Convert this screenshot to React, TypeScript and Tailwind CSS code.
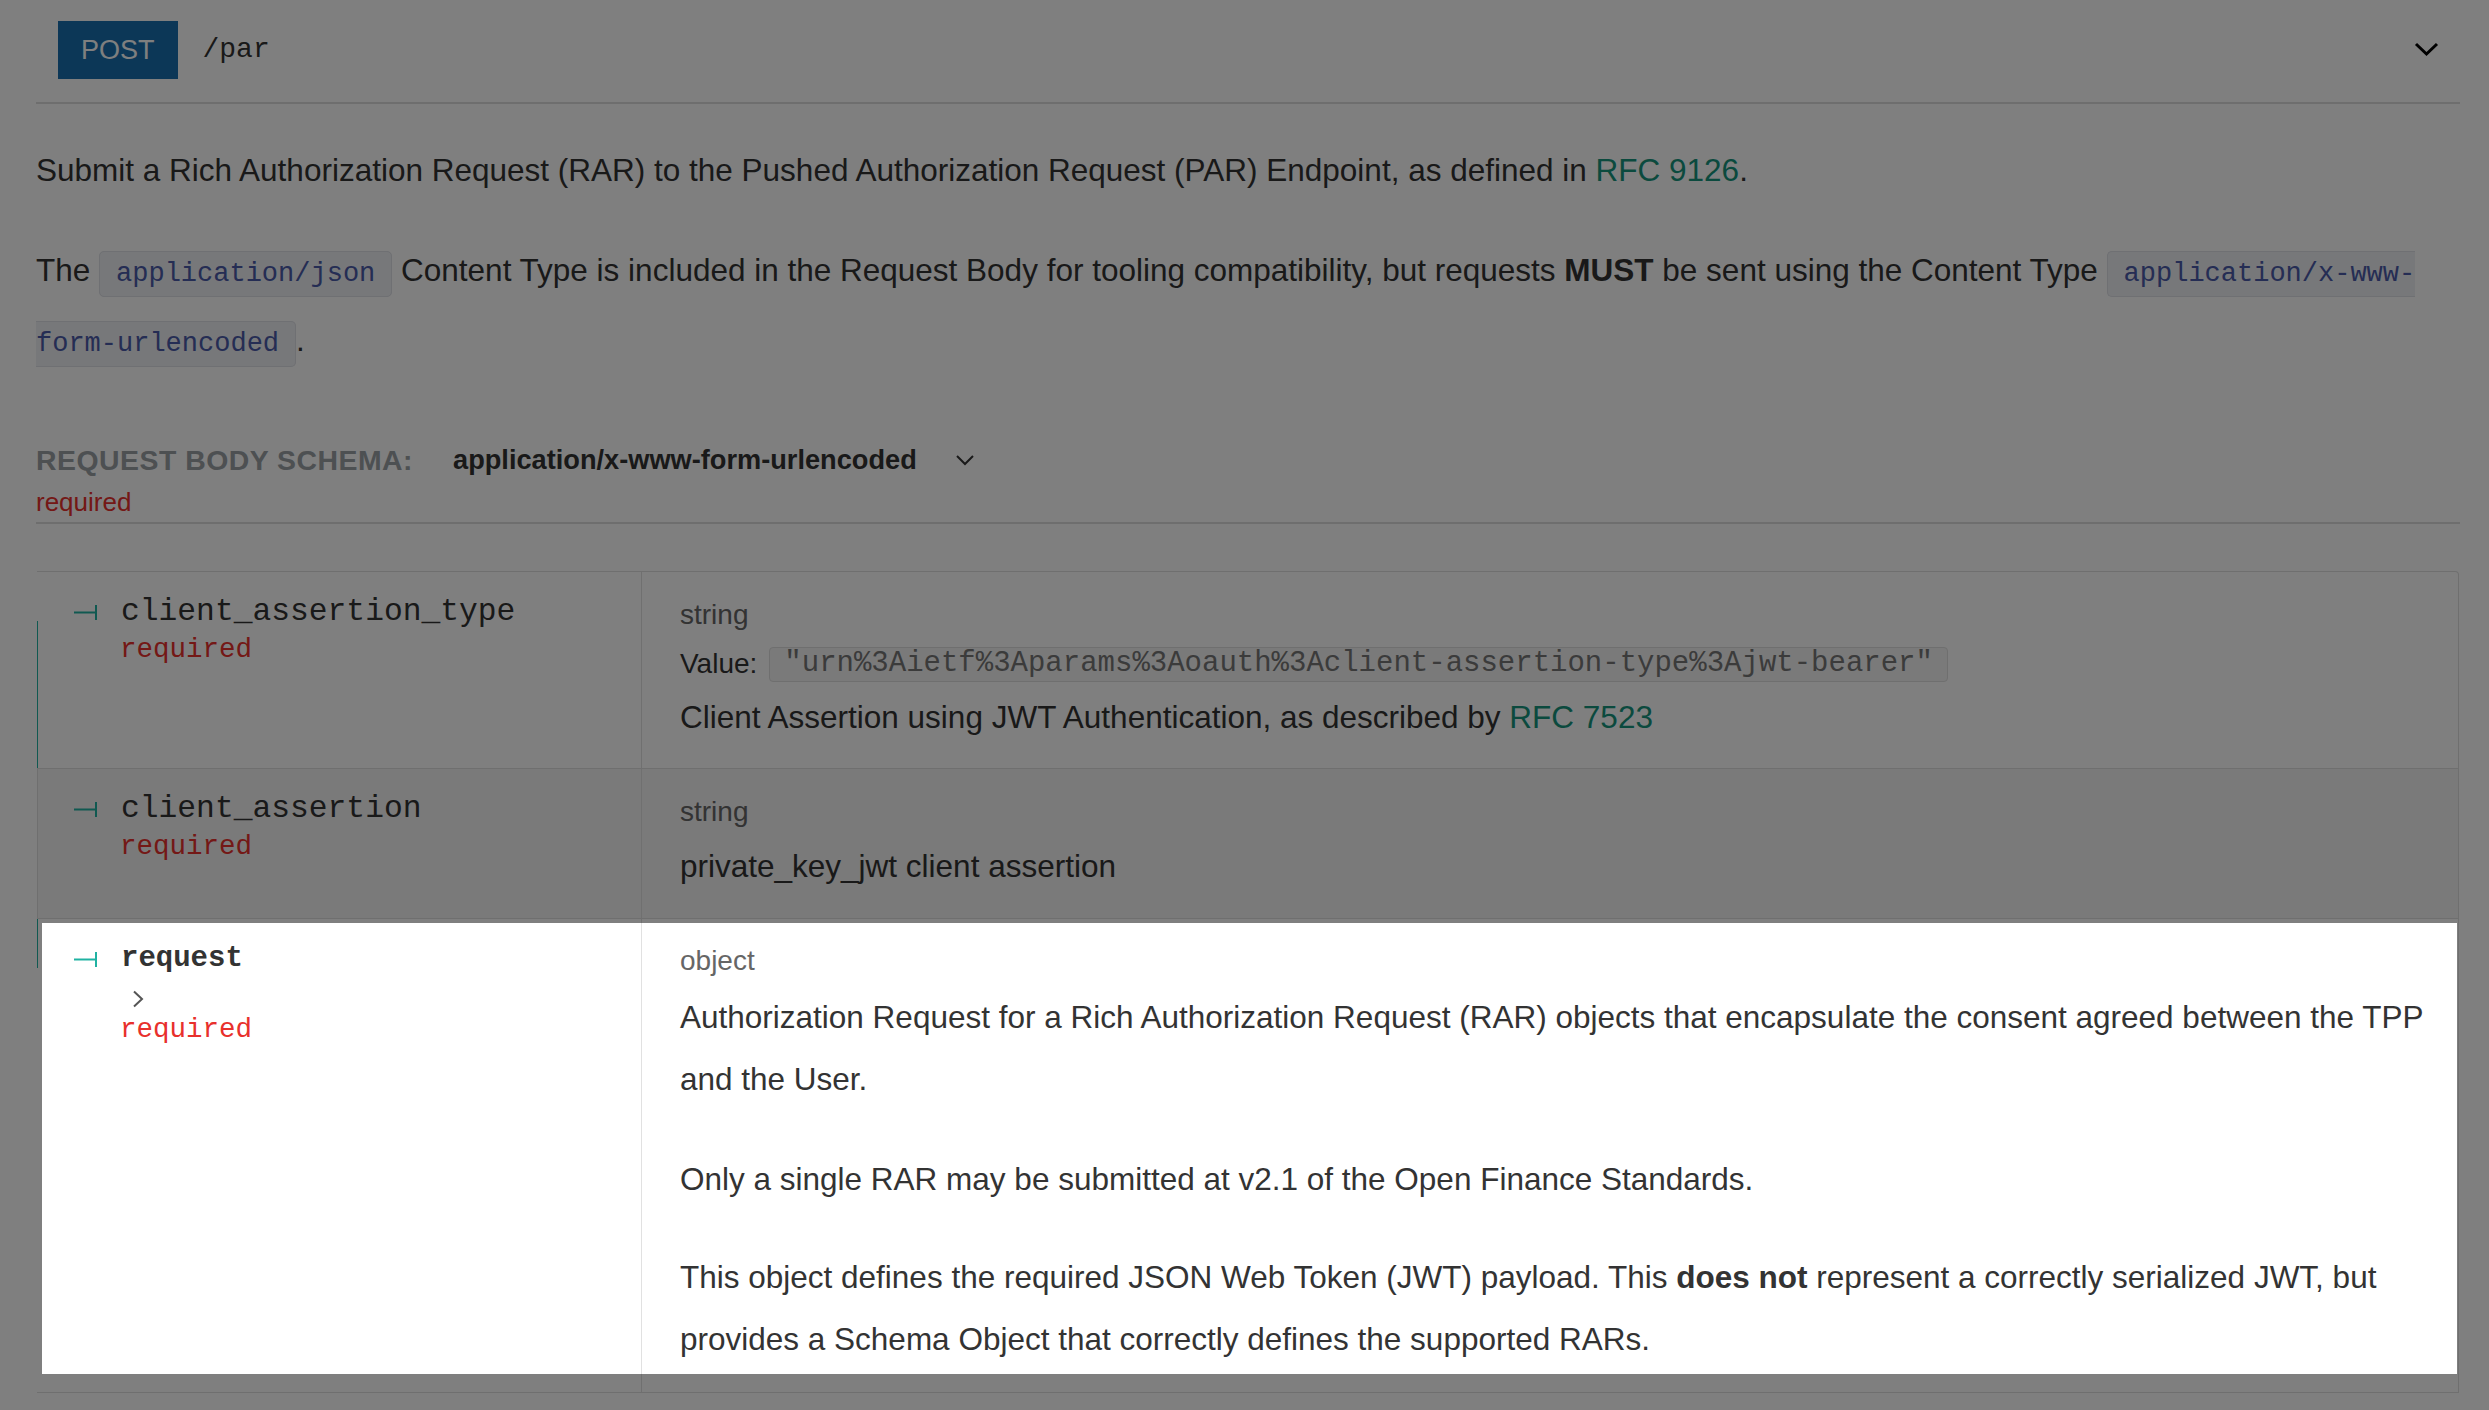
const sans = "font-['Liberation_Sans',Arial,sans-serif]";
const mono = "font-['Liberation_Mono','Courier_New',monospace]";

function Marker() {
  return (
    <svg width="24" height="15" viewBox="0 0 24 15" className="shrink-0">
      <path d="M0 7.5 H22" stroke="#20b2a2" strokeWidth="2" />
      <path d="M22 0 V15" stroke="#20b2a2" strokeWidth="2" />
    </svg>
  );
}

function TreeLine({ kind }: { kind: 'first' | 'middle' | 'last' }) {
  if (kind === 'middle') return <div className="w-px self-stretch bg-[#dedede]" />;
  return (
    <div className="w-px self-stretch flex flex-col">
      <div className={`h-[49px] ${kind === 'last' ? 'bg-[#20b2a2]' : ''}`} />
      <div className={`flex-1 ${kind === 'first' ? 'bg-[#20b2a2]' : ''}`} />
    </div>
  );
}

export default function App() {
  return (
    <div className={`min-h-screen bg-white text-[#333] pl-[36px] pr-[29px] ${sans}`}>
      {/* Operation header */}
      <div className="flex items-start h-[104px] border-b-2 border-[#dcdcdc] pl-[22px] pr-[21px] pt-[21px]">
        <div className="h-[58px] px-[23px] flex items-center bg-[#186faf] text-white text-[27px]">POST</div>
        <div className={`h-[58px] flex items-center ml-[25px] text-[28px] text-[#333] ${mono}`}>/par</div>
        <svg width="25" height="15" viewBox="0 0 25 15" className="ml-auto mt-[21px]">
          <polyline points="2,2 12.5,12 23,2" fill="none" stroke="#000" strokeWidth="3" />
        </svg>
      </div>

      {/* Description */}
      <p className="mt-[35px] text-[31.5px] leading-[62px]">
        Submit a Rich Authorization Request (RAR) to the Pushed Authorization Request (PAR) Endpoint, as defined in{' '}
        <span className="text-[#16947c]">RFC 9126</span>.
      </p>
      <p className="mt-[36px] text-[31.5px] leading-[66px]">
        The{' '}
        <code className={`px-[16px] py-[7px] rounded-[5px] border border-[#dee0e6] bg-[#eef0f4] text-[27px] text-[#4a5aa8] ${mono}`}>
          application/json
        </code>{' '}
        Content Type is included in the Request Body for tooling compatibility, but requests <b>MUST</b> be sent using the Content Type{' '}
        <code className={`px-[16px] py-[7px] rounded-[5px] border border-[#dee0e6] bg-[#eef0f4] text-[27px] text-[#4a5aa8] ${mono}`}>
          application/x-www-
          <br />
          form-urlencoded
        </code>
        .
      </p>

      {/* Request body schema */}
      <div className="mt-[65px] flex items-center h-[36px]">
        <span className="text-[28.4px] font-bold tracking-[0.5px] text-[#9aa0a5] uppercase">Request Body schema:</span>
        <span className="ml-[40px] text-[27.2px] font-bold text-[#333]">application/x-www-form-urlencoded</span>
        <svg width="20" height="12" viewBox="0 0 20 12" className="ml-[38px]">
          <polyline points="2,2 10,10 18,2" fill="none" stroke="#333" strokeWidth="2" />
        </svg>
      </div>
      <div className="text-[26px] leading-[32px] text-[#e8302c] mt-[8px]">required</div>
      <div className="mt-[4px] border-b-2 border-[#dcdcdc]" />

      {/* Properties table */}
      <div className="mt-[47px] mx-px border-t border-r border-b border-[#dedede] rounded-tr-[4px]">
        {/* row 1 */}
        <div className="flex border-b border-[#dedede]">
          <div className="w-[604px] flex shrink-0">
            <TreeLine kind="first" />
            <div className="pl-[36px] pt-[21px]">
              <div className="flex items-center h-[38px]">
                <Marker />
                <span className={`ml-[23px] text-[31.3px] text-[#333] ${mono}`}>client_assertion_type</span>
              </div>
              <div className={`ml-[46px] h-[37px] leading-[37px] text-[27.5px] text-[#e8302c] ${mono}`}>required</div>
            </div>
          </div>
          <div className="flex-1 border-l border-[#e1e1e1] pl-[38px] pr-[10px] pt-[24px] pb-[28px]">
            <div className="h-[38px] leading-[38px] text-[28px] text-[#666]">string</div>
            <div className="mt-[7px] h-[46px] flex items-center text-[28px]">
              <span>Value:</span>
              <span className={`ml-[12px] px-[14px] h-[35px] flex items-center rounded-[4px] border border-[#dedede] bg-[#f4f4f4] text-[29px] text-[#777] ${mono}`}>
                "urn%3Aietf%3Aparams%3Aoauth%3Aclient-assertion-type%3Ajwt-bearer"
              </span>
            </div>
            <div className="mt-[7px] h-[46px] leading-[46px] text-[31.5px]">
              Client Assertion using JWT Authentication, as described by <span className="text-[#16947c]">RFC 7523</span>
            </div>
          </div>
        </div>

        {/* row 2 */}
        <div className="flex border-b border-[#dedede] bg-[#f4f4f4]">
          <div className="w-[604px] flex shrink-0">
            <TreeLine kind="middle" />
            <div className="pl-[36px] pt-[21px]">
              <div className="flex items-center h-[38px]">
                <Marker />
                <span className={`ml-[23px] text-[31.3px] text-[#333] ${mono}`}>client_assertion</span>
              </div>
              <div className={`ml-[46px] h-[37px] leading-[37px] text-[27.5px] text-[#e8302c] ${mono}`}>required</div>
            </div>
          </div>
          <div className="flex-1 border-l border-[#e1e1e1] pl-[38px] pr-[10px] pt-[24px] pb-[29px]">
            <div className="h-[38px] leading-[38px] text-[28px] text-[#666]">string</div>
            <div className="mt-[12px] h-[46px] leading-[46px] text-[31.5px]">private_key_jwt client assertion</div>
          </div>
        </div>

        {/* row 3 (highlighted) */}
        <div className="relative flex bg-white">
          <div className="w-[604px] flex shrink-0">
            <TreeLine kind="last" />
            <div className="pl-[36px] pt-[21px]">
              <div className="flex items-center h-[38px]">
                <Marker />
                <span className={`ml-[23px] text-[29px] font-bold text-[#333] ${mono}`}>request</span>
              </div>
              <div className="ml-[58px] h-[33px] pt-[12px]">
                <svg width="12" height="18" viewBox="0 0 12 18">
                  <polyline points="2,1.5 10,9 2,16.5" fill="none" stroke="#555" strokeWidth="2" />
                </svg>
              </div>
              <div className={`ml-[46px] h-[37px] leading-[37px] text-[27.5px] text-[#e8302c] ${mono}`}>required</div>
            </div>
          </div>
          <div className="flex-1 border-l border-[#e1e1e1] pl-[38px] pr-[10px] pt-[23px] pb-[22px]">
            <div className="h-[38px] leading-[38px] text-[28px] text-[#666]">object</div>
            <p className="mt-[6px] text-[31.5px] leading-[62px]">
              Authorization Request for a Rich Authorization Request (RAR) objects that encapsulate the consent agreed between the TPP
              <br />
              and the User.
            </p>
            <p className="mt-[38px] text-[31.5px] leading-[62px]">Only a single RAR may be submitted at v2.1 of the Open Finance Standards.</p>
            <p className="mt-[36px] text-[31.5px] leading-[62px]">
              This object defines the required JSON Web Token (JWT) payload. This <b>does not</b> represent a correctly serialized JWT, but
              <br />
              provides a Schema Object that correctly defines the supported RARs.
            </p>
          </div>
          {/* tour spotlight */}
          <div className="absolute left-[5px] right-[1px] top-[4px] bottom-[18px] z-10 pointer-events-none shadow-[0_0_0_9999px_rgba(0,0,0,0.5)]" />
        </div>
      </div>
    </div>
  );
}
